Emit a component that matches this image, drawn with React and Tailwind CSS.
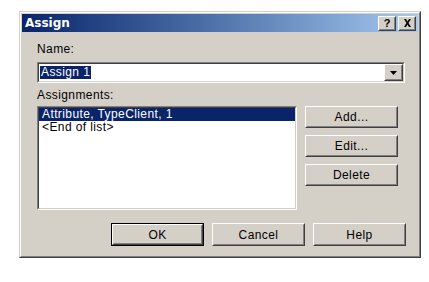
const raised = "border border-t-white border-l-white border-r-[#404040] border-b-[#404040]";
const raisedInner = "border border-t-[#d4d0c8] border-l-[#d4d0c8] border-r-[#808080] border-b-[#808080]";
const sunken = "border border-t-[#808080] border-l-[#808080] border-r-white border-b-white";
const sunkenInner = "border border-t-[#404040] border-l-[#404040] border-r-[#d4d0c8] border-b-[#d4d0c8]";

function Button({ label, isDefault = false, className = "" }) {
  const inner = (
    <div className={`${raised} w-full h-full`}>
      <div className={`${raisedInner} w-full h-full flex items-center justify-center text-black`}>
        {label}
      </div>
    </div>
  );
  if (isDefault) {
    return <div className={`border border-black ${className}`}>{inner}</div>;
  }
  return <div className={className}>{inner}</div>;
}

function TitleButton({ children }) {
  return (
    <div className={`${raised} w-[18px] h-[15px] bg-[#d4d0c8]`}>
      <div className={`${raisedInner} w-full h-full flex items-center justify-center`}>
        {children}
      </div>
    </div>
  );
}

export default function App() {
  return (
    <div
      className="w-[429px] h-[282px] bg-white pt-[11px] pl-[19px] text-[12px] leading-[14px] tracking-[0.4px]"
      style={{ fontFamily: '"Liberation Sans", Arial, sans-serif' }}
    >
      {/* Window frame */}
      <div className="w-[402px] h-[247px] border border-t-[#d4d0c8] border-l-[#d4d0c8] border-r-[#404040] border-b-[#404040]">
        <div className="w-full h-full border border-t-white border-l-white border-r-[#808080] border-b-[#808080] bg-[#d4d0c8] p-[1px] flex flex-col">
          {/* Title bar */}
          <div className="h-[18px] flex items-center justify-between bg-gradient-to-r from-[#0a246a] to-[#a6caf0] pl-[3px] pr-[2px]">
            <span
              className="text-white font-bold text-[12px] tracking-normal"
              style={{ fontFamily: '"DejaVu Sans", Verdana, sans-serif' }}
            >
              Assign
            </span>
            <div className="flex gap-[2px]">
              <TitleButton>
                <span className="font-bold text-[11px] leading-none text-black tracking-normal">?</span>
              </TitleButton>
              <TitleButton>
                <svg width="9" height="8" viewBox="0 0 9 8">
                  <path d="M1 0h2l1.5 2.5L6 0h2L5.5 4 8 8H6L4.5 5.5 3 8H1l2.5-4z" fill="#000" />
                </svg>
              </TitleButton>
            </div>
          </div>

          {/* Body */}
          <div className="flex-1 flex flex-col pl-[15px] pr-[12px]">
            <div className="mt-[10px]">Name:</div>

            {/* Combobox */}
            <div className={`${sunken} mt-[6px] h-[21px] mr-[1px]`}>
              <div className={`${sunkenInner} h-full bg-white flex items-center justify-between pl-[1px] pr-0`}>
                <span className="bg-[#0a246a] text-white px-[1px] leading-[13px] h-[13px]">Assign 1</span>
                <div className={`${raised} w-[19px] h-full bg-[#d4d0c8]`}>
                  <div className={`${raisedInner} w-full h-full flex items-center justify-center`}>
                    <svg width="7" height="4" viewBox="0 0 7 4">
                      <path d="M0 0h7L3.5 4z" fill="#000" />
                    </svg>
                  </div>
                </div>
              </div>
            </div>

            <div className="mt-[5px]">Assignments:</div>

            <div className="mt-[4px] flex gap-[8px]">
              {/* List box */}
              <div className={`${sunken} w-[260px] h-[104px]`}>
                <div className={`${sunkenInner} h-full bg-white`}>
                  <div className="bg-[#0a246a] text-white h-[13px] leading-[13px] pl-[3px]">
                    Attribute, TypeClient, 1
                  </div>
                  <div className="h-[13px] leading-[13px] pl-[3px] text-black">&lt;End of list&gt;</div>
                </div>
              </div>

              {/* Side buttons */}
              <div className="flex flex-col gap-[7px]">
                <Button label="Add..." className="w-[93px] h-[22px]" />
                <Button label="Edit..." className="w-[93px] h-[22px]" />
                <Button label="Delete" className="w-[93px] h-[22px]" />
              </div>
            </div>

            {/* Bottom buttons */}
            <div className="mt-[13px] flex justify-end gap-[8px]">
              <Button label="OK" isDefault className="w-[93px] h-[23px]" />
              <Button label="Cancel" className="w-[93px] h-[23px]" />
              <Button label="Help" className="w-[93px] h-[23px]" />
            </div>
          </div>
        </div>
      </div>
    </div>
  );
}
